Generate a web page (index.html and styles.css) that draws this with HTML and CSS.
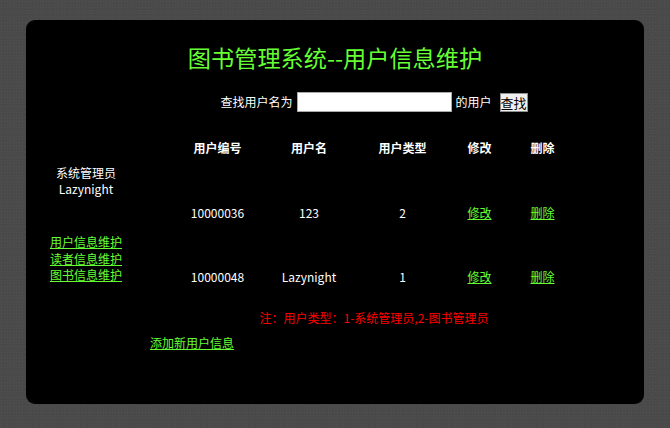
FILE: index.html
```html
<!DOCTYPE html>
<html lang="zh-CN">
<head>
<meta charset="utf-8">
<title>图书管理系统--用户信息维护</title>
<link rel="stylesheet" href="styles.css">
</head>
<body>
<div class="panel">
  <h1 class="title">图书管理系统--用户信息维护</h1>
  <div class="main">
    <div class="sidebar">
      <div class="who">
        <div>系统管理员</div>
        <div>Lazynight</div>
      </div>
      <div class="nav">
        <a href="#">用户信息维护</a>
        <a href="#">读者信息维护</a>
        <a href="#">图书信息维护</a>
      </div>
    </div>
    <div class="content">
      <form class="search">
        <span>查找用户名为</span>
        <input class="search-input" type="text">
        <span>的用户</span>
        <button class="search-btn" type="button">查找</button>
      </form>
      <div class="grid">
        <div class="th">用户编号</div>
        <div class="th">用户名</div>
        <div class="th">用户类型</div>
        <div class="th">修改</div>
        <div class="th">删除</div>

        <div class="td">10000036</div>
        <div class="td">123</div>
        <div class="td">2</div>
        <div class="td"><a href="#">修改</a></div>
        <div class="td"><a href="#">删除</a></div>

        <div class="td">10000048</div>
        <div class="td">Lazynight</div>
        <div class="td">1</div>
        <div class="td"><a href="#">修改</a></div>
        <div class="td"><a href="#">删除</a></div>
      </div>
      <p class="note">注：用户类型：1-系统管理员,2-图书管理员</p>
      <div class="add"><a href="#">添加新用户信息</a></div>
    </div>
  </div>
</div>
</body>
</html>
```

FILE: styles.css
```css
html, body {
  margin: 0;
  padding: 0;
}
body {
  width: 670px;
  height: 428px;
  overflow: hidden;
  background-color: #4a4a4a;
  background-image:
    radial-gradient(rgba(255,255,255,0.03) 1px, transparent 1px),
    radial-gradient(rgba(0,0,0,0.05) 1px, transparent 1px);
  background-size: 3px 3px, 7px 5px;
  background-position: 0 0, 1px 2px;
  font-family: "Noto Sans CJK SC", "Noto Sans", sans-serif;
  font-size: 12px;
  color: #fff;
}
a {
  color: #66ff33;
  text-decoration: underline;
}
.panel {
  box-sizing: border-box;
  margin: 20px 0 0 26px;
  width: 618px;
  height: 384px;
  background: #000;
  border-radius: 9px;
  padding-top: 21px;
}
.title {
  margin: 0;
  height: 32px;
  line-height: 32px;
  font-size: 23.2px;
  font-weight: normal;
  color: #66ff33;
  text-align: center;
}
.main {
  display: flex;
}
.sidebar {
  width: 120px;
  padding-top: 92px;
  text-align: center;
}
.who {
  line-height: 16px;
}
.nav {
  margin-top: 37px;
  display: flex;
  flex-direction: column;
  align-items: center;
  line-height: 16.5px;
}
.content {
  width: 456px;
  display: flex;
  flex-direction: column;
  align-items: center;
}
.search {
  margin: 19px 0 0 0;
  height: 20px;
  display: flex;
  align-items: center;
  line-height: 20px;
}
.search-input {
  box-sizing: border-box;
  width: 155px;
  height: 20px;
  margin: 0 4px;
  border: 1px solid #a9a9a9;
  background: #fff;
  padding: 0;
}
.search-btn {
  box-sizing: border-box;
  margin-left: 8px;
  width: 28px;
  height: 19px;
  padding: 0;
  border: 1px solid #8f8f8f;
  background: #efefef;
  color: #000;
  font-family: "Noto Sans CJK SC", sans-serif;
  font-size: 13px;
  line-height: 17px;
}
.grid {
  margin-top: 23px;
  display: grid;
  grid-template-columns: 90px 93px 94px 60px 66px;
  grid-template-rows: 26px 24px 24px;
  row-gap: 40px;
  text-align: center;
}
.th {
  font-weight: bold;
  line-height: 26px;
}
.td {
  line-height: 24px;
}
.note {
  margin: 19px 0 0 0;
  line-height: 20px;
  color: #ff0000;
}
.add {
  align-self: flex-start;
  margin: 5px 0 0 4px;
  line-height: 20px;
}
```
